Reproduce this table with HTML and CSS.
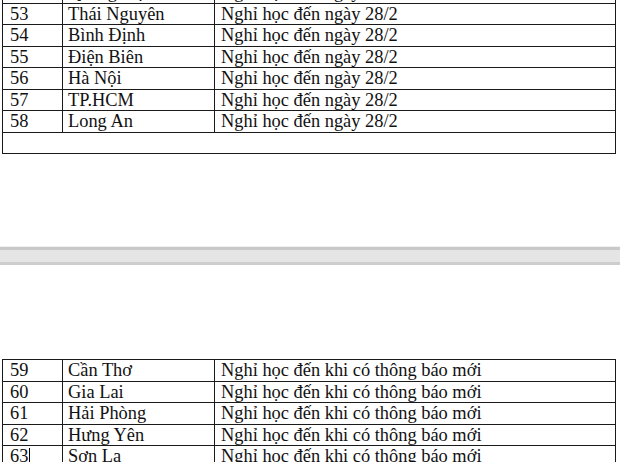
FILE: index.html
```html
<!DOCTYPE html>
<html lang="vi">
<head>
<meta charset="utf-8">
<link rel="stylesheet" href="styles.css">
</head>
<body>
<div class="sheet sheet-top">
  <table class="grid grid-top">
    <tr><td class="c1">52</td><td class="c2">Quảng Trị</td><td class="c3">Nghỉ học đến ngày 28/2</td></tr>
    <tr><td class="c1">53</td><td class="c2">Thái Nguyên</td><td class="c3">Nghỉ học đến ngày 28/2</td></tr>
    <tr><td class="c1">54</td><td class="c2">Bình Định</td><td class="c3">Nghỉ học đến ngày 28/2</td></tr>
    <tr><td class="c1">55</td><td class="c2">Điện Biên</td><td class="c3">Nghỉ học đến ngày 28/2</td></tr>
    <tr><td class="c1">56</td><td class="c2">Hà Nội</td><td class="c3">Nghỉ học đến ngày 28/2</td></tr>
    <tr><td class="c1">57</td><td class="c2">TP.HCM</td><td class="c3">Nghỉ học đến ngày 28/2</td></tr>
    <tr><td class="c1">58</td><td class="c2">Long An</td><td class="c3">Nghỉ học đến ngày 28/2</td></tr>
    <tr><td class="merged" colspan="3"></td></tr>
  </table>
</div>
<div class="page-break"></div>
<div class="sheet sheet-bottom">
  <table class="grid">
    <tr><td class="c1">59</td><td class="c2">Cần Thơ</td><td class="c3">Nghỉ học đến khi có thông báo mới</td></tr>
    <tr><td class="c1">60</td><td class="c2">Gia Lai</td><td class="c3">Nghỉ học đến khi có thông báo mới</td></tr>
    <tr><td class="c1">61</td><td class="c2">Hải Phòng</td><td class="c3">Nghỉ học đến khi có thông báo mới</td></tr>
    <tr><td class="c1">62</td><td class="c2">Hưng Yên</td><td class="c3">Nghỉ học đến khi có thông báo mới</td></tr>
    <tr><td class="c1">63<span class="caret"></span></td><td class="c2">Sơn La</td><td class="c3">Nghỉ học đến khi có thông báo mới</td></tr>
  </table>
</div>
</body>
</html>
```

FILE: styles.css
```css
html, body {
  margin: 0;
  padding: 0;
  background: #ffffff;
}
body {
  width: 620px;
  height: 462px;
  overflow: hidden;
  font-family: "Liberation Serif", "Times New Roman", serif;
  font-size: 18.4px;
  color: #111;
}
.sheet {
  background: #fff;
  overflow: hidden;
}
.sheet-top {
  height: 247px;
}
.sheet-bottom {
  padding-top: 94px;
  height: 103px;
}
.grid {
  border-collapse: collapse;
  margin-left: 2px;
  width: 614px;
  table-layout: fixed;
}
.grid-top {
  margin-top: -19px;
}
.grid td {
  border: 1px solid #1a1a1a;
  height: 20.5px;
  padding: 0 0 0 6px;
  line-height: 20px;
  white-space: nowrap;
  vertical-align: middle;
}
.grid td.c1 {
  width: 52px;
  padding-left: 7px;
}
.grid td.c2 {
  width: 146px;
  padding-left: 5px;
}
.grid td.merged {
  height: 20.5px;
}
.caret {
  display: inline-block;
  width: 1px;
  height: 17px;
  background: #000;
  vertical-align: -3px;
  margin-left: 1px;
}
.page-break {
  height: 12px;
  background: #e5e5e5;
  border-top: 3px solid #c9c9c9;
  border-bottom: 3px solid #cdcdcd;
  box-shadow: 0 -1px 0 #f0f0f0, 0 1px 0 #f0f0f0;
}
```
